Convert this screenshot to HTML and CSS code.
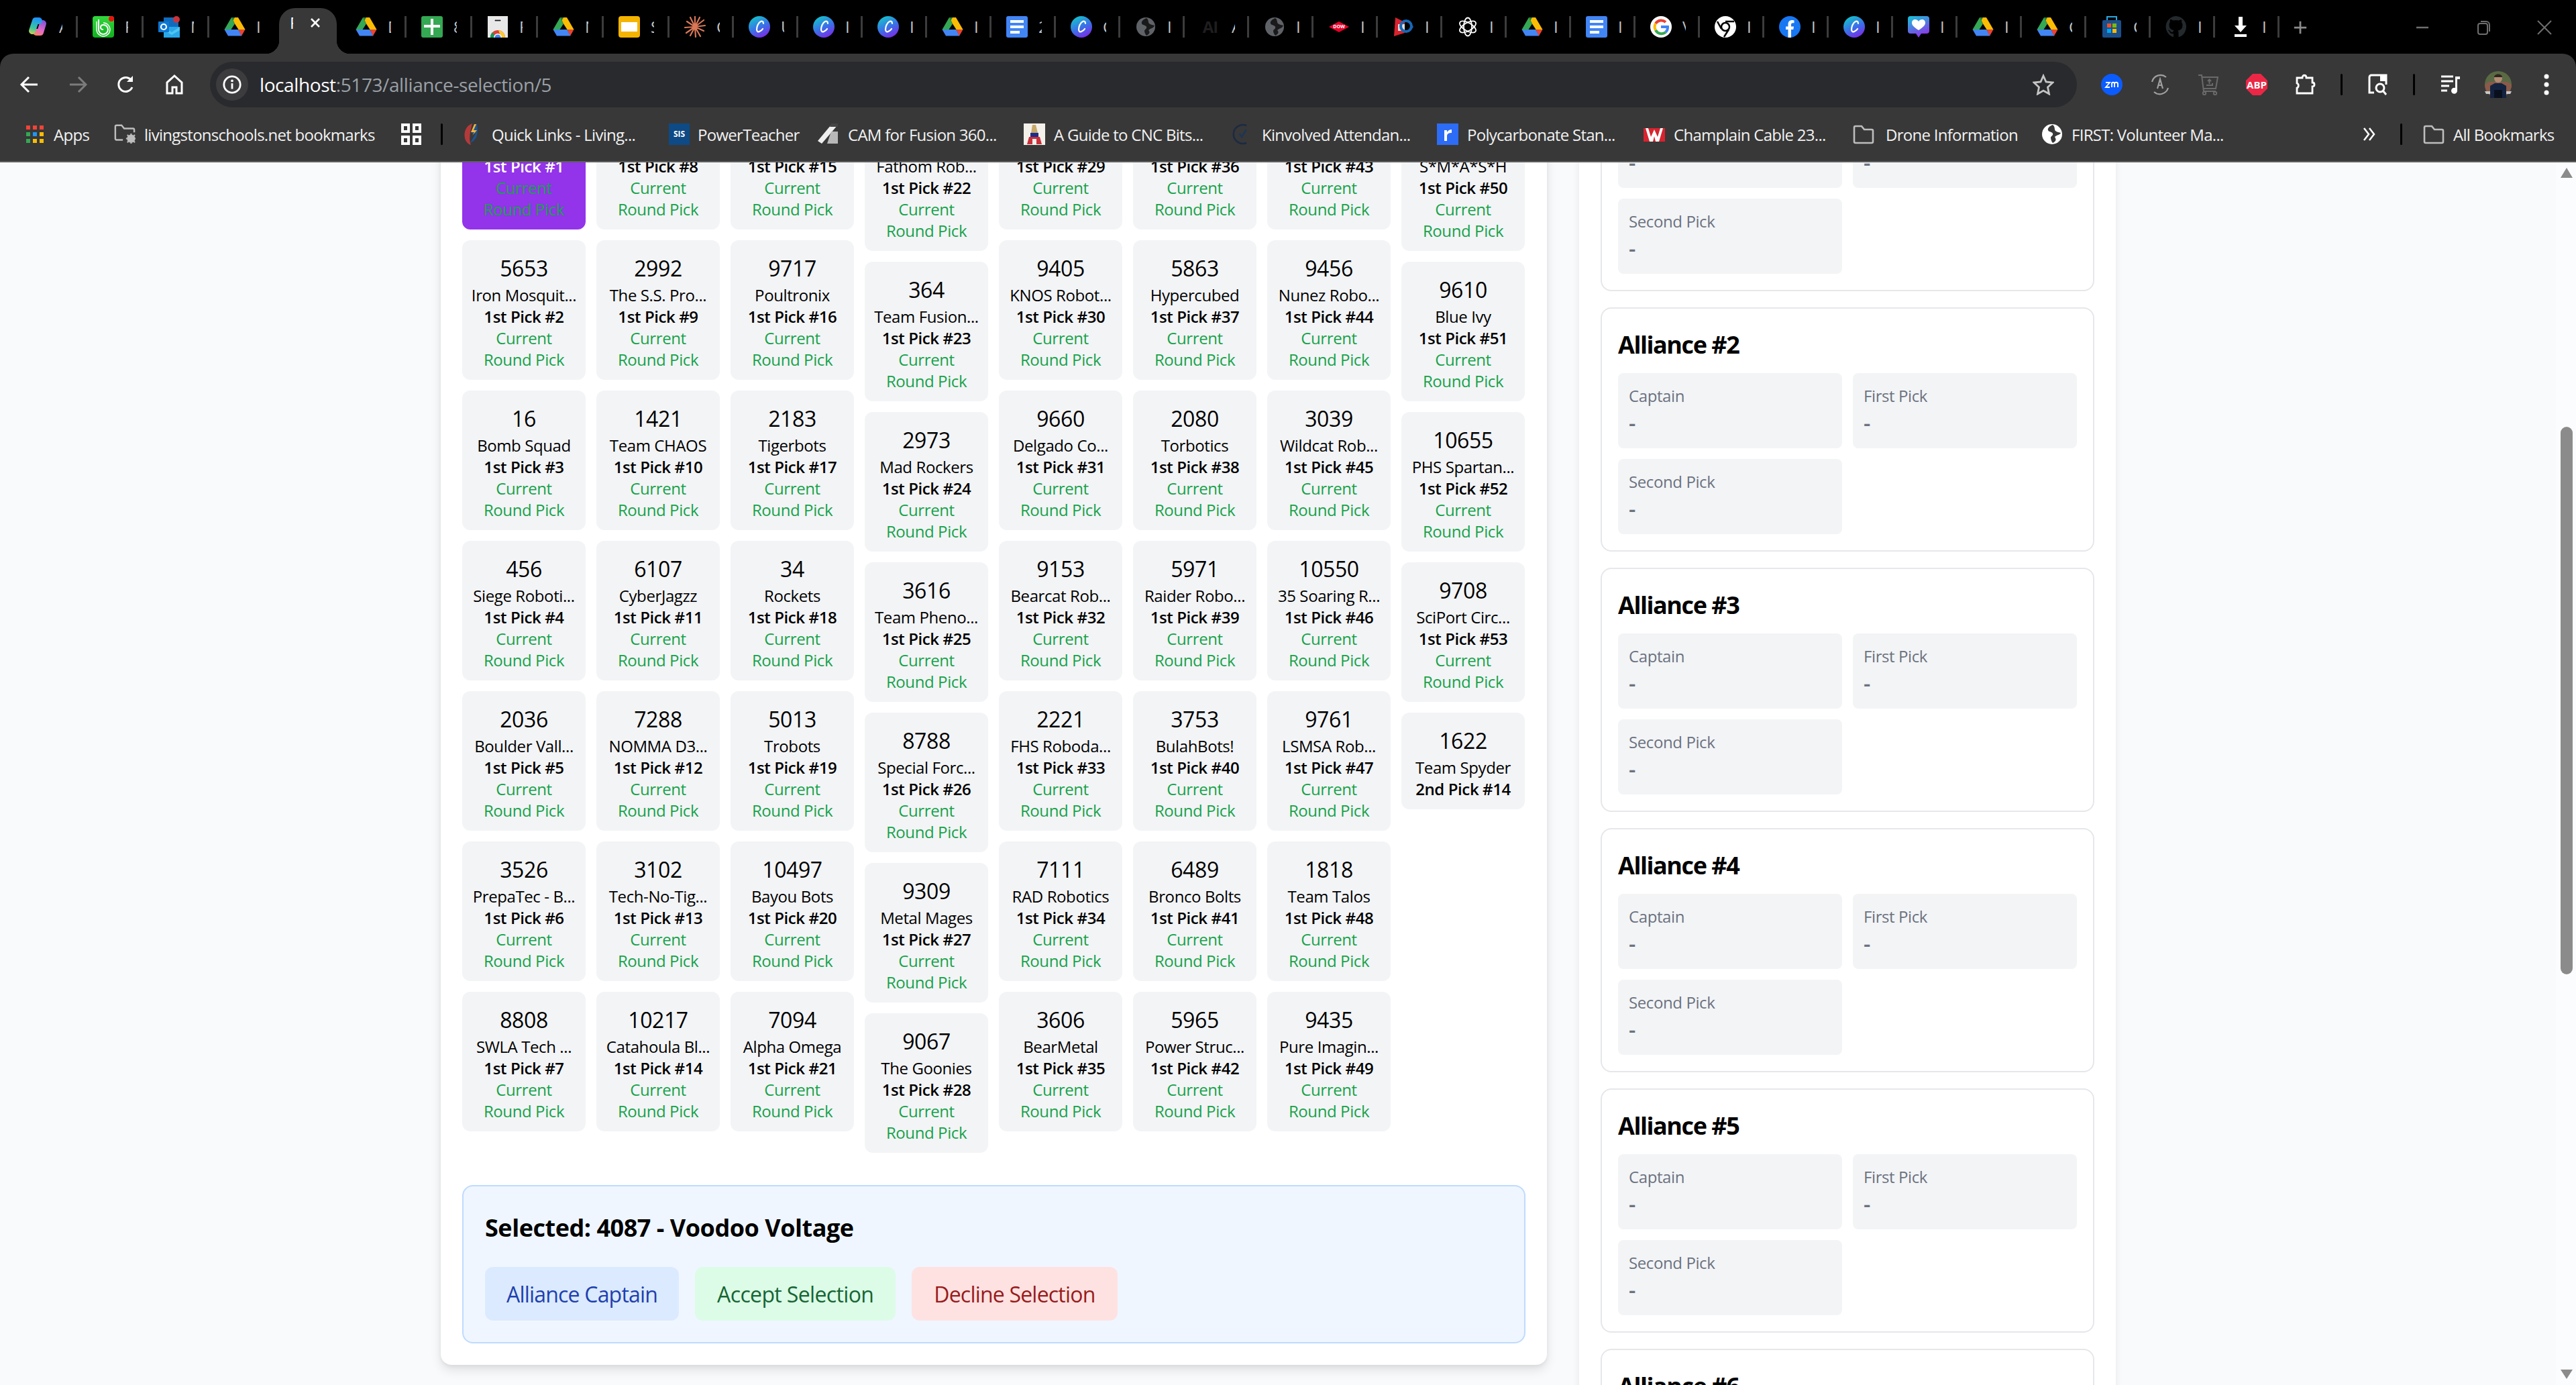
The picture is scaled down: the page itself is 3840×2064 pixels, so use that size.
FILE: index.html
```html
<!DOCTYPE html>
<html lang="en">
<head>
<meta charset="utf-8">
<title>Alliance Selection</title>
<link rel="stylesheet" href="styles.css">
</head>
<body>
<svg class="defs" aria-hidden="true">
  <defs>
    <linearGradient id="gCopA" gradientUnits="userSpaceOnUse" x1="14" y1="2" x2="6" y2="30"><stop offset="0" stop-color="#1e90ff"/><stop offset=".55" stop-color="#37c6a0"/><stop offset="1" stop-color="#ffd23c"/></linearGradient>
    <linearGradient id="gCopB" gradientUnits="userSpaceOnUse" x1="26" y1="4" x2="12" y2="30"><stop offset="0" stop-color="#6c4fe0"/><stop offset=".6" stop-color="#e56ac8"/><stop offset="1" stop-color="#ff8a4c"/></linearGradient>
    <linearGradient id="gCanva" x1="0.2" y1="0" x2="0.7" y2="1"><stop offset="0" stop-color="#12c8c8"/><stop offset=".55" stop-color="#3b6fe8"/><stop offset="1" stop-color="#7d2ae8"/></linearGradient>
    <linearGradient id="gHeart" x1="0" y1="0" x2="0.4" y2="1"><stop offset="0" stop-color="#12c6d8"/><stop offset="1" stop-color="#8a3ae8"/></linearGradient>
    <linearGradient id="gGreen" x1="0" y1="0" x2="0" y2="1"><stop offset="0" stop-color="#34d83c"/><stop offset="1" stop-color="#10b020"/></linearGradient>
    <symbol id="copilot" viewBox="0 0 32 32"><g fill="none" stroke-linecap="round" stroke-linejoin="round" stroke-width="10"><path d="M24 11L20 24H14" stroke="url(#gCopB)"/><path d="M18 7H13L8 22" stroke="url(#gCopA)"/></g></symbol>
    <symbol id="greenb" viewBox="0 0 32 32"><rect width="32" height="32" rx="4" fill="url(#gGreen)"/><path d="M9 5v15a7 7 0 1 0 7-7c-3 0-4 2-4 4s2 3 4 3" fill="none" stroke="#fff" stroke-width="2"/><path d="M6 8v12a10 10 0 1 0 10-10" fill="none" stroke="#fff" stroke-width="1.4"/><circle cx="28" cy="4" r="4" fill="#f01010"/></symbol>
    <symbol id="outlook" viewBox="0 0 32 32"><rect x="8" y="2" width="22" height="14" fill="#0f6cbd"/><path d="M8 16h24v16H8z" fill="#28a8ea"/><path d="M8 16l12 8 12-8v5l-12 7-12-7z" fill="#50c4f0"/><rect y="8" width="16" height="16" rx="1" fill="#0f78d4"/><circle cx="8" cy="16" r="4" fill="none" stroke="#fff" stroke-width="2.2"/><circle cx="27" cy="5" r="5" fill="#c9343c"/></symbol>
    <symbol id="drive" viewBox="0 0 32 32"><path fill="#fbbc04" d="M11 2h10l10.500 18H21.500L16 11.500z"/><path fill="#34a853" d="M11 2l5 9.500L10.500 20H.5z"/><path fill="#188038" d="M11 2h5l-2.500 4.500z"/><path fill="#4285f4" d="M.5 20h21l5 9.500H6z"/><path fill="#ea4335" d="M21.500 20h10L26 29.500z"/></symbol>
    <symbol id="sheetplus" viewBox="0 0 32 32"><rect width="32" height="32" rx="3" fill="#34a853"/><path fill="#fff" d="M14 4h4v9h10v4H18v11h-4V17H4v-4h10z"/></symbol>
    <symbol id="store" viewBox="0 0 32 32"><rect width="30" height="32" x="1" fill="#e8e8e8"/><rect x="11" y="5" width="10" height="3" rx="1.500" fill="#222" stroke="#fff"/><path d="M5 32a11 11 0 0 1 22 0" fill="#db4437"/><path d="M17 21a11 11 0 0 1 10 11h-6z" fill="#fcc934"/><path d="M5 32a11 11 0 0 1 3-8l5 8z" fill="#0f9d58"/><circle cx="16" cy="32" r="6" fill="#fff"/><circle cx="16" cy="32" r="4.500" fill="#4285f4"/></symbol>
    <symbol id="slides" viewBox="0 0 32 32"><rect width="32" height="32" rx="4" fill="#f4b400"/><rect x="4" y="9" width="24" height="14" fill="#fff"/></symbol>
    <symbol id="burst" viewBox="0 0 32 32"><g stroke="#d97757" stroke-width="2.200" stroke-linecap="round"><path d="M16 16L16 1M16 16L23 2M16 16L29 6M16 16L31 14M16 16L29 22M16 16L24 30M16 16L17 31M16 16L9 29M16 16L3 25M16 16L1 17M16 16L4 8M16 16L9 2"/></g></symbol>
    <symbol id="canva" viewBox="0 0 32 32"><circle cx="16" cy="16" r="16" fill="url(#gCanva)"/><path d="M22 11c0-3-2-4-4-3-4 2-6 8-6 12 0 3 2 4 4 3 2-1 4-2 5-4" fill="none" stroke="#fff" stroke-width="2.200" stroke-linecap="round"/></symbol>
    <symbol id="docs" viewBox="0 0 32 32"><rect width="32" height="32" rx="3" fill="#4285f4"/><rect x="6" y="6" width="20" height="4" fill="#fff"/><rect x="6" y="14" width="20" height="4" fill="#fff"/><rect x="6" y="22" width="14" height="4" fill="#fff"/></symbol>
    <symbol id="globe" viewBox="0 0 32 32"><circle cx="16" cy="16" r="14" fill="#5f6368"/><path d="M17 3c-5 2-8 5-7 8s6 2 7 5-3 4-3 6 1 5 3 7c6-3 5-6 3-8 3-3 8-3 9-7-2-1-6-1-8-3s0-5-4-8z" fill="#1a1a1a"/></symbol>
    <symbol id="dow" viewBox="0 0 32 32"><path d="M1 16L16 8l15 8-15 8z" fill="#e8002a"/></symbol>
    <symbol id="flag" viewBox="0 0 32 32"><path d="M4 2l14 7v16L2 30z" fill="#d8232e"/><path d="M8 12h10v10H8z" fill="#ddd"/><circle cx="20" cy="15" r="8" fill="none" stroke="#1867b8" stroke-width="4"/><path d="M26 10l5 6-5 6z" fill="#1867b8"/></symbol>
    <symbol id="openai" viewBox="0 0 32 32"><g fill="none" stroke="#fff" stroke-width="1.800"><ellipse cx="16" cy="16" rx="6" ry="13.500"/><ellipse cx="16" cy="16" rx="6" ry="13.500" transform="rotate(60 16 16)"/><ellipse cx="16" cy="16" rx="6" ry="13.500" transform="rotate(120 16 16)"/></g></symbol>
    <symbol id="google" viewBox="0 0 32 32"><circle cx="16" cy="16" r="16" fill="#fff"/><g fill="none" stroke-width="4"><path d="M23 9a10 10 0 0 0-15 2" stroke="#ea4335"/><path d="M8 11a10 10 0 0 0 0 10" stroke="#fbbc05"/><path d="M8 21a10 10 0 0 0 15 3" stroke="#34a853"/><path d="M23 24a10 10 0 0 0 3-8H16" stroke="#4285f4"/></g></symbol>
    <symbol id="chrome" viewBox="0 0 32 32"><circle cx="16" cy="16" r="16" fill="#fff"/><circle cx="16" cy="16" r="6" fill="none" stroke="#000" stroke-width="2.500"/><path d="M16 8h13M10 19L4 8M21 20L14 31" stroke="#000" stroke-width="2.500"/></symbol>
    <symbol id="fb" viewBox="0 0 32 32"><circle cx="16" cy="16" r="16" fill="#1877f2"/><path d="M13.500 32V20H10v-4.500h3.500V12c0-4 2.500-6 6-6 1.500 0 3 .3 3 .3v4h-2c-2 0-2.500 1-2.500 2.500v2.700H22l-.7 4.500h-3.300v12z" fill="#fff"/></symbol>
    <symbol id="heart" viewBox="0 0 32 32"><path d="M4 0h24a4 4 0 0 1 4 4v18a4 4 0 0 1-4 4h-8l-4 6-4-6H4a4 4 0 0 1-4-4V4a4 4 0 0 1 4-4z" fill="url(#gHeart)"/><path d="M16 21c-8-5-10-8-10-11 0-3 2-5 5-5 2 0 4 1 5 3 1-2 3-3 5-3 3 0 5 2 5 5 0 3-2 6-10 11z" fill="#fff"/></symbol>
    <symbol id="msstore" viewBox="0 0 32 32"><rect x="2" y="6" width="28" height="26" rx="2" fill="#1b4f8c"/><path d="M9 6V1h14v5" fill="none" stroke="#29a8e0" stroke-width="2"/><rect x="9" y="11" width="6" height="6" fill="#f25022"/><rect x="17" y="11" width="6" height="6" fill="#7fba00"/><rect x="9" y="19" width="6" height="6" fill="#00a4ef"/><rect x="17" y="19" width="6" height="6" fill="#ffb900"/></symbol>
    <symbol id="github" viewBox="0 0 32 32"><path fill="#24292e" d="M16 0a16 16 0 0 0-5 31c1 0 1-.5 1-1v-4c-4.500 1-5.500-2-5.500-2-1-2-2-2.500-2-2.500-1.500-1 0-1 0-1 1.500 0 2.500 1.500 2.500 1.500 1.500 2.500 3.500 2 4.500 1.500 0-1 .5-2 1-2.500-3.500-.5-7-2-7-8 0-2 .5-3 1.500-4-.2-.5-.7-2 0-4 0 0 1.500-.5 4.500 1.500a15 15 0 0 1 8 0C22.500 5 24 5.500 24 5.500c.7 2 .2 3.500 0 4 1 1 1.500 2 1.500 4 0 6-3.500 7.500-7 8 .5.500 1 1.500 1 3v5.500c0 .5 0 1 1 1A16 16 0 0 0 16 0z"/></symbol>
    <symbol id="download" viewBox="0 0 32 32"><path fill="#fff" d="M13 1h6v13h6l-9 10-9-10h6z"/><rect x="7" y="27" width="18" height="4" fill="#fff"/></symbol>
    <symbol id="folder" viewBox="0 0 32 32"><path d="M2 27V6a2 2 0 0 1 2-2h9l4 5h11a2 2 0 0 1 2 2v16a2 2 0 0 1-2 2H4a2 2 0 0 1-2-2z" fill="none" stroke="#bdbdbd" stroke-width="2.600"/></symbol>
    <symbol id="earth" viewBox="0 0 32 32"><circle cx="16" cy="16" r="15" fill="#fff"/><path d="M17 2c-5 2-8 5-7 8s6 2 7 5-3 4-3 6 1 6 3 8c6-3 5-6 3-9 3-3 8-3 9-6-2-1-6-1-8-3s0-6-4-9z" fill="#383838"/></symbol>
  </defs>
</svg>

<header class="chrome">
  <div class="tabstrip">
    <div class="tab"><svg class="fav"><use href="#copilot"/></svg><span class="sliver">A</span></div>
    <div class="tab"><svg class="fav"><use href="#greenb"/></svg><span class="sliver">F</span></div>
    <div class="tab"><svg class="fav"><use href="#outlook"/></svg><span class="sliver">M</span></div>
    <div class="tab no-sep"><svg class="fav"><use href="#drive"/></svg><span class="sliver">I</span></div>
    <div class="tab active"><span class="sliver">F</span><svg class="close" viewBox="0 0 16 16"><path d="M2 2l12 12M14 2L2 14" stroke="#fff" stroke-width="2.600" fill="none"/></svg></div>
    <div class="tab"><svg class="fav"><use href="#drive"/></svg><span class="sliver">D</span></div>
    <div class="tab"><svg class="fav"><use href="#sheetplus"/></svg><span class="sliver">8</span></div>
    <div class="tab"><svg class="fav"><use href="#store"/></svg><span class="sliver">F</span></div>
    <div class="tab"><svg class="fav"><use href="#drive"/></svg><span class="sliver">N</span></div>
    <div class="tab"><svg class="fav"><use href="#slides"/></svg><span class="sliver">S</span></div>
    <div class="tab"><svg class="fav"><use href="#burst"/></svg><span class="sliver">C</span></div>
    <div class="tab"><svg class="fav"><use href="#canva"/></svg><span class="sliver">U</span></div>
    <div class="tab"><svg class="fav"><use href="#canva"/></svg><span class="sliver">I</span></div>
    <div class="tab"><svg class="fav"><use href="#canva"/></svg><span class="sliver">I</span></div>
    <div class="tab"><svg class="fav"><use href="#drive"/></svg><span class="sliver">I</span></div>
    <div class="tab"><svg class="fav"><use href="#docs"/></svg><span class="sliver">2</span></div>
    <div class="tab"><svg class="fav"><use href="#canva"/></svg><span class="sliver">C</span></div>
    <div class="tab"><svg class="fav"><use href="#globe"/></svg><span class="sliver">I</span></div>
    <div class="tab"><span class="fav ai-mark">AI</span><span class="sliver">A</span></div>
    <div class="tab"><svg class="fav"><use href="#globe"/></svg><span class="sliver">I</span></div>
    <div class="tab"><span class="fav dow-mark"><svg class="fav"><use href="#dow"/></svg><span class="dow-text">DOW</span></span><span class="sliver">I</span></div>
    <div class="tab"><svg class="fav"><use href="#flag"/></svg><span class="sliver">I</span></div>
    <div class="tab"><svg class="fav"><use href="#openai"/></svg><span class="sliver">I</span></div>
    <div class="tab"><svg class="fav"><use href="#drive"/></svg><span class="sliver">I</span></div>
    <div class="tab"><svg class="fav"><use href="#docs"/></svg><span class="sliver">I</span></div>
    <div class="tab"><svg class="fav"><use href="#google"/></svg><span class="sliver">V</span></div>
    <div class="tab"><svg class="fav"><use href="#chrome"/></svg><span class="sliver">I</span></div>
    <div class="tab"><svg class="fav"><use href="#fb"/></svg><span class="sliver">I</span></div>
    <div class="tab"><svg class="fav"><use href="#canva"/></svg><span class="sliver">I</span></div>
    <div class="tab"><svg class="fav"><use href="#heart"/></svg><span class="sliver">I</span></div>
    <div class="tab"><svg class="fav"><use href="#drive"/></svg><span class="sliver">I</span></div>
    <div class="tab"><svg class="fav"><use href="#drive"/></svg><span class="sliver">C</span></div>
    <div class="tab"><svg class="fav"><use href="#msstore"/></svg><span class="sliver">C</span></div>
    <div class="tab"><svg class="fav"><use href="#github"/></svg><span class="sliver">I</span></div>
    <div class="tab"><svg class="fav"><use href="#download"/></svg><span class="sliver">I</span></div>
    <svg class="newtab" viewBox="0 0 24 24"><path d="M12 2v20M2 12h20" stroke="#8a8a8a" stroke-width="3"/></svg>
    <div class="winctl">
      <svg class="winbtn" viewBox="0 0 24 24"><path d="M3 12h18" stroke="#6e6e6e" stroke-width="2.500"/></svg>
      <svg class="winbtn" viewBox="0 0 24 24"><rect x="4" y="6" width="14" height="16" rx="3" fill="none" stroke="#6e6e6e" stroke-width="2"/><path d="M8 3h8a5 5 0 0 1 5 5v10" fill="none" stroke="#6e6e6e" stroke-width="2"/></svg>
      <svg class="winbtn" viewBox="0 0 24 24"><path d="M2 2l20 20M22 2L2 22" stroke="#6e6e6e" stroke-width="2"/></svg>
    </div>
  </div>

  <div class="toolbar">
    <div class="tbtn"><svg class="ticon" viewBox="0 0 32 32"><path d="M28 16H5M15 5L4 16l11 11" fill="none" stroke="#fff" stroke-width="3"/></svg></div>
    <div class="tbtn"><svg class="ticon" viewBox="0 0 32 32"><path d="M4 16h23M17 5l11 11-11 11" fill="none" stroke="#7c7c7c" stroke-width="3"/></svg></div>
    <div class="tbtn"><svg class="ticon" viewBox="0 0 32 32"><path d="M25 20a10.500 10.500 0 1 1-1-10" fill="none" stroke="#fff" stroke-width="3"/><path d="M26 3v9h-9" fill="#fff"/></svg></div>
    <div class="tbtn"><svg class="ticon" viewBox="0 0 32 32"><path d="M16 3L5 13v16h8v-9h6v9h8V13z" fill="none" stroke="#fff" stroke-width="3"/></svg></div>
    <div class="omnibox">
      <div class="infochip"><svg class="info" viewBox="0 0 32 32"><circle cx="16" cy="16" r="13" fill="none" stroke="#fff" stroke-width="3"/><path d="M16 14v9" stroke="#fff" stroke-width="3"/><circle cx="16" cy="10" r="2" fill="#fff"/></svg></div>
      <span class="url"><span class="host">localhost</span>:5173/alliance-selection/5</span>
      <svg class="star" viewBox="0 0 32 32"><path d="M16 3l4 9 10 1-7.500 7 2 10L16 25l-8.500 5 2-10L2 13l10-1z" fill="none" stroke="#c4c4c4" stroke-width="2.800"/></svg>
    </div>
    <div class="extensions">
      <div class="tbtn"><svg class="ticon" viewBox="0 0 32 32"><rect width="32" height="32" rx="16" fill="#0b5cff"/><path d="M7 13h6l-6 7h6M16 20v-7M16 15c0-3 4-3 4 0v5M20 15c0-3 5-3 5 0v5" fill="none" stroke="#fff" stroke-width="1.800"/></svg></div>
      <div class="tbtn"><svg class="ticon" viewBox="0 0 32 32"><g fill="none" stroke="#a0a0a0" stroke-width="2.200"><path d="M4 12A13 13 0 0 1 25 5M28 21A13 13 0 0 1 7 27"/><path d="M12 22l4-14 4 14M14 17h5"/></g></svg></div>
      <div class="tbtn"><svg class="ticon" viewBox="0 0 32 32"><g fill="none" stroke="#6a6a6a" stroke-width="2"><path d="M1 2h5l3 24h18"/><path d="M6 5h24l-3 17H9"/><circle cx="10" cy="29" r="2.200"/><circle cx="26" cy="29" r="2.200"/><path d="M13 17h9v-3M17.500 15V9M15 11l2.500-2.500L20 11"/></g></svg></div>
      <div class="tbtn abp"><svg class="ticon" viewBox="0 0 32 32"><path d="M10 0h12l10 10v12L22 32H10L0 22V10z" fill="#ec2746"/></svg><span class="abp-text">ABP</span></div>
      <div class="tbtn"><svg class="ticon" viewBox="0 0 32 32"><path d="M4 6h8c0-5 6-5 6 0h9v7c4 0 4 6 0 6v10H4v-8c3-1 3-6 0-7z" fill="none" stroke="#fff" stroke-width="2.800"/></svg></div>
      <div class="vsep"></div>
      <div class="tbtn"><svg class="ticon" viewBox="0 0 32 32"><path d="M17 2h12v14M11 28H4V5a3 3 0 0 1 3-3h10" fill="none" stroke="#fff" stroke-width="3"/><path d="M20 2h9v9H20z" fill="#fff"/><circle cx="20" cy="21" r="6" fill="none" stroke="#fff" stroke-width="3"/><path d="M24 25l5 6" stroke="#fff" stroke-width="3"/></svg></div>
      <div class="vsep"></div>
      <div class="tbtn"><svg class="ticon" viewBox="0 0 32 32"><path d="M3 4h18M3 11h18M3 18h12M3 25h9" stroke="#fff" stroke-width="3"/><path d="M24 4h7v4h-4v17a4.500 4.500 0 1 1-3-4z" fill="#fff"/></svg></div>
      <div class="tbtn"><svg class="avatar" viewBox="0 0 40 40"><circle cx="20" cy="20" r="20" fill="#5a6a44"/><path d="M0 20a20 20 0 0 0 40 0l-6-4H6z" fill="#8a5a4a"/><path d="M8 40V22l7-4h10l7 4v18z" fill="#13233f"/><path d="M0 30h8v4H2zM32 30h8l-2 4h-6z" fill="#c8c8c8"/><path d="M14 28h12v12H14z" fill="#0a0f1e"/><circle cx="20" cy="11" r="6" fill="#b38c73"/><path d="M14 9c0-6 12-6 12 0z" fill="#2c2620"/></svg></div>
      <div class="tbtn"><svg class="kebab" viewBox="0 0 8 32"><circle cx="4" cy="4" r="3.500" fill="#fff"/><circle cx="4" cy="16" r="3.500" fill="#fff"/><circle cx="4" cy="28" r="3.500" fill="#fff"/></svg></div>
    </div>
  </div>

  <nav class="bookmarks">
    <div class="bm"><svg class="bmi" viewBox="0 0 26 26"><g><rect x="0" y="0" width="6" height="6" fill="#f44336"/><rect x="10" y="0" width="6" height="6" fill="#f44336"/><rect x="20" y="0" width="6" height="6" fill="#f44336"/><rect x="0" y="10" width="6" height="6" fill="#34a853"/><rect x="10" y="10" width="6" height="6" fill="#2196f3"/><rect x="20" y="10" width="6" height="6" fill="#fbbc04"/><rect x="0" y="20" width="6" height="6" fill="#34a853"/><rect x="10" y="20" width="6" height="6" fill="#fbbc04"/><rect x="20" y="20" width="6" height="6" fill="#fbbc04"/></g></svg><span>Apps</span></div>
    <div class="bm"><svg class="bmi" viewBox="0 0 34 32"><path d="M14 25H4a2 2 0 0 1-2-2V4a2 2 0 0 1 2-2h8l4 5h14a2 2 0 0 1 2 2v4" fill="none" stroke="#bdbdbd" stroke-width="2.600"/><circle cx="27" cy="23" r="4.500" fill="none" stroke="#bdbdbd" stroke-width="4"/><path d="M27 15v16M19 23h16M21 17l12 12M33 17L21 29" stroke="#bdbdbd" stroke-width="2.200"/></svg><span>livingstonschools.net bookmarks</span></div>
    <div class="bm"><svg class="bmi" viewBox="0 0 30 32"><g fill="none" stroke="#fff" stroke-width="4"><rect x="2" y="2" width="9" height="10"/><rect x="19" y="2" width="9" height="10"/><rect x="2" y="20" width="9" height="10"/><rect x="19" y="20" width="9" height="10"/></g></svg></div>
    <div class="bsep"></div>
    <div class="bm"><svg class="bmi" viewBox="0 0 32 32"><path d="M16 0C7 3 3 12 5 22c1 5 5 9 9 10-3-8-2-17 2-32z" fill="#b33a3a"/><path d="M21 1l-6 14h6l-8 14c8-3 13-12 10-28z" fill="#1c5390"/><path d="M19 1l-5 12h5l-3 5 7-8h-5l4-9z" fill="#f2b33d"/></svg><span>Quick Links - Living...</span></div>
    <div class="bm"><span class="sis">SIS</span><span>PowerTeacher</span></div>
    <div class="bm"><svg class="bmi" viewBox="0 0 32 32"><path d="M0 26L20 2h10L6 30z" fill="#eee"/><path d="M20 12h10v18H14z" fill="#b8b8b8"/><path d="M20 0h10v5H18z" fill="#444"/></svg><span>CAM for Fusion 360...</span></div>
    <div class="bm"><svg class="bmi" viewBox="0 0 32 32"><rect width="32" height="32" fill="#f4f1ea"/><path d="M13 2h5l3 12H11z" fill="#c7a96a"/><path d="M10 14h12v6H10z" fill="#1c2c8c"/><path d="M8 20h16l3 11H5z" fill="#c8303a"/><path d="M13 23h6v8h-6z" fill="#f4f1ea"/></svg><span>A Guide to CNC Bits...</span></div>
    <div class="bm"><svg class="bmi" viewBox="0 0 32 32"><path d="M22 3A14 14 0 1 0 22 29" fill="none" stroke="#1c2a42" stroke-width="2.500"/><path d="M11 15l4 5 7-11" fill="none" stroke="#1e3556" stroke-width="2.500"/></svg><span>Kinvolved Attendan...</span></div>
    <div class="bm"><svg class="bmi" viewBox="0 0 32 32"><rect width="32" height="32" fill="#2d6cf6"/><path d="M11 26V10h4v3c2-3 4-4 7-4v5c-4 0-7 1-7 5v7z" fill="#fff"/></svg><span>Polycarbonate Stan...</span></div>
    <div class="bm"><svg class="bmi" viewBox="0 0 32 32"><rect y="7" width="32" height="20" fill="#d8232e"/><path d="M3 7h4l4 13 5-11 5 11 4-13h4l-6 20h-5l-2-8-2 8H9z" fill="#fff"/></svg><span>Champlain Cable 23...</span></div>
    <div class="bm"><svg class="bmi"><use href="#folder"/></svg><span class="drone">Drone Information</span></div>
    <div class="bm"><svg class="bmi"><use href="#earth"/></svg><span>FIRST: Volunteer Ma...</span></div>
    <svg class="chev" viewBox="0 0 20 24"><path d="M3 3l7 9-7 9M11 3l7 9-7 9" fill="none" stroke="#fff" stroke-width="2.500"/></svg>
    <div class="bsep"></div>
    <div class="bm"><svg class="bmi"><use href="#folder"/></svg><span>All Bookmarks</span></div>
  </nav>
</header>

<div class="page">
  <div class="layout">
    <main class="draft-panel">
      <div class="draft-grid">
        <div class="col">
          <div class="card selected"><div class="hidden-head"></div><div class="pick">1st Pick #1</div><div class="cur">Current</div><div class="cur">Round Pick</div></div>
          <div class="card"><div class="num">5653</div><div class="name">Iron Mosquit...</div><div class="pick">1st Pick #2</div><div class="cur">Current</div><div class="cur">Round Pick</div></div>
          <div class="card"><div class="num">16</div><div class="name">Bomb Squad</div><div class="pick">1st Pick #3</div><div class="cur">Current</div><div class="cur">Round Pick</div></div>
          <div class="card"><div class="num">456</div><div class="name">Siege Roboti...</div><div class="pick">1st Pick #4</div><div class="cur">Current</div><div class="cur">Round Pick</div></div>
          <div class="card"><div class="num">2036</div><div class="name">Boulder Vall...</div><div class="pick">1st Pick #5</div><div class="cur">Current</div><div class="cur">Round Pick</div></div>
          <div class="card"><div class="num">3526</div><div class="name">PrepaTec - B...</div><div class="pick">1st Pick #6</div><div class="cur">Current</div><div class="cur">Round Pick</div></div>
          <div class="card"><div class="num">8808</div><div class="name">SWLA Tech ...</div><div class="pick">1st Pick #7</div><div class="cur">Current</div><div class="cur">Round Pick</div></div>
        </div>
        <div class="col">
          <div class="card"><div class="hidden-head"></div><div class="pick">1st Pick #8</div><div class="cur">Current</div><div class="cur">Round Pick</div></div>
          <div class="card"><div class="num">2992</div><div class="name">The S.S. Pro...</div><div class="pick">1st Pick #9</div><div class="cur">Current</div><div class="cur">Round Pick</div></div>
          <div class="card"><div class="num">1421</div><div class="name">Team CHAOS</div><div class="pick">1st Pick #10</div><div class="cur">Current</div><div class="cur">Round Pick</div></div>
          <div class="card"><div class="num">6107</div><div class="name">CyberJagzz</div><div class="pick">1st Pick #11</div><div class="cur">Current</div><div class="cur">Round Pick</div></div>
          <div class="card"><div class="num">7288</div><div class="name">NOMMA D3...</div><div class="pick">1st Pick #12</div><div class="cur">Current</div><div class="cur">Round Pick</div></div>
          <div class="card"><div class="num">3102</div><div class="name">Tech-No-Tig...</div><div class="pick">1st Pick #13</div><div class="cur">Current</div><div class="cur">Round Pick</div></div>
          <div class="card"><div class="num">10217</div><div class="name">Catahoula Bl...</div><div class="pick">1st Pick #14</div><div class="cur">Current</div><div class="cur">Round Pick</div></div>
        </div>
        <div class="col">
          <div class="card"><div class="hidden-head"></div><div class="pick">1st Pick #15</div><div class="cur">Current</div><div class="cur">Round Pick</div></div>
          <div class="card"><div class="num">9717</div><div class="name">Poultronix</div><div class="pick">1st Pick #16</div><div class="cur">Current</div><div class="cur">Round Pick</div></div>
          <div class="card"><div class="num">2183</div><div class="name">Tigerbots</div><div class="pick">1st Pick #17</div><div class="cur">Current</div><div class="cur">Round Pick</div></div>
          <div class="card"><div class="num">34</div><div class="name">Rockets</div><div class="pick">1st Pick #18</div><div class="cur">Current</div><div class="cur">Round Pick</div></div>
          <div class="card"><div class="num">5013</div><div class="name">Trobots</div><div class="pick">1st Pick #19</div><div class="cur">Current</div><div class="cur">Round Pick</div></div>
          <div class="card"><div class="num">10497</div><div class="name">Bayou Bots</div><div class="pick">1st Pick #20</div><div class="cur">Current</div><div class="cur">Round Pick</div></div>
          <div class="card"><div class="num">7094</div><div class="name">Alpha Omega</div><div class="pick">1st Pick #21</div><div class="cur">Current</div><div class="cur">Round Pick</div></div>
        </div>
        <div class="col">
          <div class="card"><div class="hidden-head"></div><div class="name">Fathom Rob...</div><div class="pick">1st Pick #22</div><div class="cur">Current</div><div class="cur">Round Pick</div></div>
          <div class="card"><div class="num">364</div><div class="name">Team Fusion...</div><div class="pick">1st Pick #23</div><div class="cur">Current</div><div class="cur">Round Pick</div></div>
          <div class="card"><div class="num">2973</div><div class="name">Mad Rockers</div><div class="pick">1st Pick #24</div><div class="cur">Current</div><div class="cur">Round Pick</div></div>
          <div class="card"><div class="num">3616</div><div class="name">Team Pheno...</div><div class="pick">1st Pick #25</div><div class="cur">Current</div><div class="cur">Round Pick</div></div>
          <div class="card"><div class="num">8788</div><div class="name">Special Forc...</div><div class="pick">1st Pick #26</div><div class="cur">Current</div><div class="cur">Round Pick</div></div>
          <div class="card"><div class="num">9309</div><div class="name">Metal Mages</div><div class="pick">1st Pick #27</div><div class="cur">Current</div><div class="cur">Round Pick</div></div>
          <div class="card"><div class="num">9067</div><div class="name">The Goonies</div><div class="pick">1st Pick #28</div><div class="cur">Current</div><div class="cur">Round Pick</div></div>
        </div>
        <div class="col">
          <div class="card"><div class="hidden-head"></div><div class="pick">1st Pick #29</div><div class="cur">Current</div><div class="cur">Round Pick</div></div>
          <div class="card"><div class="num">9405</div><div class="name">KNOS Robot...</div><div class="pick">1st Pick #30</div><div class="cur">Current</div><div class="cur">Round Pick</div></div>
          <div class="card"><div class="num">9660</div><div class="name">Delgado Co...</div><div class="pick">1st Pick #31</div><div class="cur">Current</div><div class="cur">Round Pick</div></div>
          <div class="card"><div class="num">9153</div><div class="name">Bearcat Rob...</div><div class="pick">1st Pick #32</div><div class="cur">Current</div><div class="cur">Round Pick</div></div>
          <div class="card"><div class="num">2221</div><div class="name">FHS Roboda...</div><div class="pick">1st Pick #33</div><div class="cur">Current</div><div class="cur">Round Pick</div></div>
          <div class="card"><div class="num">7111</div><div class="name">RAD Robotics</div><div class="pick">1st Pick #34</div><div class="cur">Current</div><div class="cur">Round Pick</div></div>
          <div class="card"><div class="num">3606</div><div class="name">BearMetal</div><div class="pick">1st Pick #35</div><div class="cur">Current</div><div class="cur">Round Pick</div></div>
        </div>
        <div class="col">
          <div class="card"><div class="hidden-head"></div><div class="pick">1st Pick #36</div><div class="cur">Current</div><div class="cur">Round Pick</div></div>
          <div class="card"><div class="num">5863</div><div class="name">Hypercubed</div><div class="pick">1st Pick #37</div><div class="cur">Current</div><div class="cur">Round Pick</div></div>
          <div class="card"><div class="num">2080</div><div class="name">Torbotics</div><div class="pick">1st Pick #38</div><div class="cur">Current</div><div class="cur">Round Pick</div></div>
          <div class="card"><div class="num">5971</div><div class="name">Raider Robo...</div><div class="pick">1st Pick #39</div><div class="cur">Current</div><div class="cur">Round Pick</div></div>
          <div class="card"><div class="num">3753</div><div class="name">BulahBots!</div><div class="pick">1st Pick #40</div><div class="cur">Current</div><div class="cur">Round Pick</div></div>
          <div class="card"><div class="num">6489</div><div class="name">Bronco Bolts</div><div class="pick">1st Pick #41</div><div class="cur">Current</div><div class="cur">Round Pick</div></div>
          <div class="card"><div class="num">5965</div><div class="name">Power Struc...</div><div class="pick">1st Pick #42</div><div class="cur">Current</div><div class="cur">Round Pick</div></div>
        </div>
        <div class="col">
          <div class="card"><div class="hidden-head"></div><div class="pick">1st Pick #43</div><div class="cur">Current</div><div class="cur">Round Pick</div></div>
          <div class="card"><div class="num">9456</div><div class="name">Nunez Robo...</div><div class="pick">1st Pick #44</div><div class="cur">Current</div><div class="cur">Round Pick</div></div>
          <div class="card"><div class="num">3039</div><div class="name">Wildcat Rob...</div><div class="pick">1st Pick #45</div><div class="cur">Current</div><div class="cur">Round Pick</div></div>
          <div class="card"><div class="num">10550</div><div class="name">35 Soaring R...</div><div class="pick">1st Pick #46</div><div class="cur">Current</div><div class="cur">Round Pick</div></div>
          <div class="card"><div class="num">9761</div><div class="name">LSMSA Rob...</div><div class="pick">1st Pick #47</div><div class="cur">Current</div><div class="cur">Round Pick</div></div>
          <div class="card"><div class="num">1818</div><div class="name">Team Talos</div><div class="pick">1st Pick #48</div><div class="cur">Current</div><div class="cur">Round Pick</div></div>
          <div class="card"><div class="num">9435</div><div class="name">Pure Imagin...</div><div class="pick">1st Pick #49</div><div class="cur">Current</div><div class="cur">Round Pick</div></div>
        </div>
        <div class="col">
          <div class="card"><div class="hidden-head"></div><div class="name">S*M*A*S*H</div><div class="pick">1st Pick #50</div><div class="cur">Current</div><div class="cur">Round Pick</div></div>
          <div class="card"><div class="num">9610</div><div class="name">Blue Ivy</div><div class="pick">1st Pick #51</div><div class="cur">Current</div><div class="cur">Round Pick</div></div>
          <div class="card"><div class="num">10655</div><div class="name">PHS Spartan...</div><div class="pick">1st Pick #52</div><div class="cur">Current</div><div class="cur">Round Pick</div></div>
          <div class="card"><div class="num">9708</div><div class="name">SciPort Circ...</div><div class="pick">1st Pick #53</div><div class="cur">Current</div><div class="cur">Round Pick</div></div>
          <div class="card"><div class="num">1622</div><div class="name">Team Spyder</div><div class="pick">2nd Pick #14</div></div>
        </div>
      </div>
      <section class="selection">
        <h2 class="selection-title">Selected: 4087 - Voodoo Voltage</h2>
        <div class="actions">
          <button class="btn btn-blue">Alliance Captain</button>
          <button class="btn btn-green">Accept Selection</button>
          <button class="btn btn-red">Decline Selection</button>
        </div>
      </section>
    </main>

    <aside class="alliance-panel">
      <section class="alliance"><div class="hidden-title"></div><div class="slots"><div class="slot"><div class="hidden-label"></div><div class="value">-</div></div><div class="slot"><div class="hidden-label"></div><div class="value">-</div></div><div class="slot"><div class="label">Second Pick</div><div class="value">-</div></div></div></section>
      <section class="alliance"><h3>Alliance #2</h3><div class="slots"><div class="slot"><div class="label">Captain</div><div class="value">-</div></div><div class="slot"><div class="label">First Pick</div><div class="value">-</div></div><div class="slot"><div class="label">Second Pick</div><div class="value">-</div></div></div></section>
      <section class="alliance"><h3>Alliance #3</h3><div class="slots"><div class="slot"><div class="label">Captain</div><div class="value">-</div></div><div class="slot"><div class="label">First Pick</div><div class="value">-</div></div><div class="slot"><div class="label">Second Pick</div><div class="value">-</div></div></div></section>
      <section class="alliance"><h3>Alliance #4</h3><div class="slots"><div class="slot"><div class="label">Captain</div><div class="value">-</div></div><div class="slot"><div class="label">First Pick</div><div class="value">-</div></div><div class="slot"><div class="label">Second Pick</div><div class="value">-</div></div></div></section>
      <section class="alliance"><h3>Alliance #5</h3><div class="slots"><div class="slot"><div class="label">Captain</div><div class="value">-</div></div><div class="slot"><div class="label">First Pick</div><div class="value">-</div></div><div class="slot"><div class="label">Second Pick</div><div class="value">-</div></div></div></section>
      <section class="alliance"><h3>Alliance #6</h3></section>
    </aside>
  </div>
  <div class="scrollbar">
    <div class="arrow-up"></div>
    <div class="thumb"></div>
    <div class="arrow-down"></div>
  </div>
</div>
</body>
</html>
```

FILE: styles.css
```css
* { box-sizing: border-box; }
html, body { margin: 0; height: 100%; overflow: hidden; }
body {
  font-family: "Open Sans", "Noto Sans", sans-serif;
  letter-spacing: -0.025em;
  background: #f9fafb;
  color: #000;
  width: 3840px;
  height: 2064px;
}
.defs { position: absolute; width: 0; height: 0; }

/* browser chrome */
.chrome { height: 242px; background: #000; }
.tabstrip { height: 80px; display: flex; padding-left: 18px; }
.tab {
  flex: 0 0 96px;
  height: 32px;
  margin-top: 24px;
  padding-left: 22px;
  display: flex;
  align-items: center;
  border-right: 3px solid #3c3c3c;
}
.tab:nth-child(-n+10) { flex-basis: 98px; }
.tab.no-sep { border-right-color: transparent; }
.fav { width: 32px; height: 32px; flex: none; display: block; }
.sliver {
  width: 5px;
  margin-left: 16px;
  overflow: hidden;
  color: #c4c4c4;
  font-size: 24px;
  line-height: 32px;
  white-space: nowrap;
  flex: none;
}
.tab.active {
  flex-basis: 86px;
  margin: 12px 6px 0;
  height: 68px;
  padding: 0 0 24px 16px;
  border: 0;
  background: #383838;
  border-radius: 24px 24px 0 0;
  position: relative;
}
.tab.active .sliver { margin-left: 0; color: #fff; }
.tab.active::before, .tab.active::after {
  content: "";
  position: absolute;
  bottom: 0;
  width: 20px;
  height: 20px;
}
.tab.active::before { left: -20px; background: radial-gradient(circle at 0 0, transparent 20px, #383838 20.5px); }
.tab.active::after { right: -20px; background: radial-gradient(circle at 100% 0, transparent 20px, #383838 20.5px); }
.close { width: 16px; height: 16px; margin-left: 25px; flex: none; }
.ai-mark { color: #1e1e1e; font-size: 24px; font-weight: 700; line-height: 32px; text-align: center; letter-spacing: -1px; }
.dow-mark { position: relative; }
.dow-text {
  position: absolute;
  inset: 0;
  text-align: center;
  color: #fff;
  font-size: 7px;
  font-weight: 700;
  line-height: 32px;
  letter-spacing: 0;
}
.newtab { width: 22px; height: 22px; margin: 30px 0 0 20px; flex: none; }
.winctl { margin-left: auto; display: flex; padding-top: 29px; padding-right: 35px; gap: 67px; }
.winbtn { width: 24px; height: 24px; }

.toolbar {
  height: 80px;
  background: #383838;
  border-radius: 20px 20px 0 0;
  display: flex;
  align-items: flex-start;
  padding: 12px 8px 0;
}
.tbtn { flex: 0 0 72px; height: 68px; display: flex; align-items: center; justify-content: center; position: relative; }
.ticon { width: 32px; height: 32px; }
.omnibox {
  flex: 0 0 2783px;
  height: 68px;
  margin-left: 17px;
  background: #292a2d;
  border-radius: 34px;
  display: flex;
  align-items: center;
  padding: 0 34px 0 9px;
}
.infochip { width: 48px; height: 48px; border-radius: 50%; background: #3c3c3f; display: flex; align-items: center; justify-content: center; }
.info { width: 30px; height: 30px; }
.url { margin-left: 17px; font-size: 28px; color: #9aa0a6; white-space: nowrap; }
.host { color: #fff; }
.star { width: 32px; height: 32px; margin-left: auto; }
.extensions { display: flex; align-items: center; margin-left: 16px; }
.vsep { flex: 0 0 36px; height: 32px; position: relative; }
.vsep::after { content: ""; position: absolute; left: 17px; top: 0; width: 3px; height: 32px; background: #000; border-radius: 2px; }
.abp-text { position: absolute; inset: 0; text-align: center; line-height: 68px; color: #fff; font-size: 15px; font-weight: 700; letter-spacing: 0; }
.avatar { width: 40px; height: 40px; }
.kebab { width: 8px; height: 32px; }

.bookmarks {
  height: 82px;
  background: #383838;
  border-bottom: 2px solid #5e5e5e;
  padding-left: 39px;
  display: grid;
  grid-template-columns: 131px 427px 60px 31px 309px 222px 307px 310px 306px 308px 312px 281px 478px 57px 34px auto;
  align-items: center;
  color: #f1f1f1;
  font-size: 24px;
  letter-spacing: -0.03em;
  white-space: nowrap;
}
.bm { display: flex; align-items: center; }
.bmi { width: 32px; height: 32px; flex: none; margin-right: 13px; }
.bm:first-child .bmi { width: 26px; height: 26px; margin-right: 15px; }
.bsep { width: 3px; height: 32px; background: #000; border-radius: 2px; }
.chev { width: 20px; height: 24px; }
.sis {
  flex: none;
  width: 31px;
  height: 32px;
  margin-right: 12px;
  background: #0e4a86;
  color: #fff;
  font-size: 12px;
  font-weight: 700;
  line-height: 32px;
  text-align: center;
  letter-spacing: 0;
}
.drone { margin-left: 4px; }

/* page */
.page { height: 1822px; display: flex; overflow: hidden; }
.layout { flex: 1; display: flex; align-items: flex-start; gap: 48px; padding-left: 657px; }
.draft-panel {
  width: 1649px;
  margin-top: -140px;
  padding: 32px;
  background: #fff;
  border-radius: 16px;
  box-shadow: 0 8px 16px rgba(0, 0, 0, .1), 0 2px 6px rgba(0, 0, 0, .06);
}
.draft-grid { display: flex; gap: 16px; align-items: flex-start; }
.col { flex: 0 0 184px; display: flex; flex-direction: column; gap: 16px; }
.card { padding: 18px 0 14px; background: #f3f4f6; border-radius: 12px; text-align: center; font-size: 24px; line-height: 32px; white-space: nowrap; }
.num { font-size: 32px; line-height: 48px; font-weight: 500; }
.hidden-head { height: 80px; }
.pick { font-weight: 600; }
.cur { color: #16a34a; }
.card.selected { background: #9333ea; color: #fff; }
.card.selected .cur { color: #16a34a; }

.selection {
  margin-top: 48px;
  padding: 32px;
  background: #eff6ff;
  border: 2px solid #bfdbfe;
  border-radius: 16px;
}
.selection-title { margin: 2px 0 30px; font-size: 36px; line-height: 56px; font-weight: 700; letter-spacing: -0.013em; }
.actions { display: flex; gap: 24px; }
.btn { height: 80px; padding: 0 32px; border: 0; border-radius: 12px; font: inherit; font-size: 32px; letter-spacing: -0.025em; }
.btn-blue { background: #dbeafe; color: #1e40af; }
.btn-green { background: #dcfce7; color: #166534; padding: 0 33px; letter-spacing: -0.02em; }
.btn-red { background: #fee2e2; color: #991b1b; padding: 0 33px; }

.alliance-panel {
  width: 800px;
  margin-top: -204px;
  padding: 32px;
  background: #fff;
  border-radius: 16px;
  box-shadow: 0 4px 12px rgba(0, 0, 0, .08);
  display: flex;
  flex-direction: column;
  gap: 24px;
  flex: none;
}
.alliance { padding: 24px; border: 2px solid #e5e7eb; border-radius: 16px; }
.alliance h3 { margin: 2px 0 14px; font-size: 36px; line-height: 56px; font-weight: 700; letter-spacing: -0.04em; }
.hidden-title { height: 72px; }
.hidden-label { height: 32px; }
.slots { display: grid; grid-template-columns: 1fr 1fr; gap: 16px; }
.slot { height: 112px; padding: 18px 16px 14px; background: #f3f4f6; border-radius: 8px; }
.label { font-size: 24px; line-height: 32px; color: #6b7280; }
.value { font-size: 32px; line-height: 48px; color: #6b7280; font-weight: 600; }

.scrollbar { flex: 0 0 30px; background: #fbfcfd; display: flex; flex-direction: column; align-items: flex-end; padding-right: 5px; }
.arrow-up { margin-top: 8px; border: 9px solid transparent; border-top: 0; border-bottom: 15px solid #8b8b8b; }
.thumb { width: 18px; height: 816px; margin-top: 371px; border-radius: 9px; background: #8b8b8b; }
.arrow-down { margin-top: auto; margin-bottom: 9px; border: 9px solid transparent; border-bottom: 0; border-top: 14px solid #8b8b8b; }
```
